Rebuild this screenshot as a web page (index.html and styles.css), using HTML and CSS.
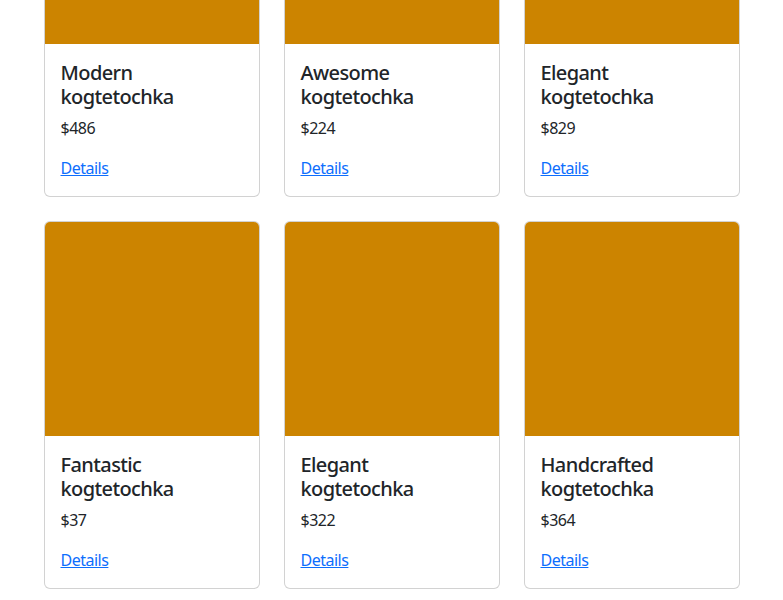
FILE: index.html
```html
<!DOCTYPE html>
<html lang="en">
<head>
<meta charset="utf-8">
<title>Kogtetochki</title>
<link rel="stylesheet" href="styles.css">
</head>
<body>
<main class="container">
  <div class="grid">
    <div class="card"><div class="card-img"></div><div class="card-body"><h5 class="card-title">Modern kogtetochka</h5><p class="card-text">$486</p><a href="#" class="card-link">Details</a></div></div>
    <div class="card"><div class="card-img"></div><div class="card-body"><h5 class="card-title">Awesome kogtetochka</h5><p class="card-text">$224</p><a href="#" class="card-link">Details</a></div></div>
    <div class="card"><div class="card-img"></div><div class="card-body"><h5 class="card-title">Elegant kogtetochka</h5><p class="card-text">$829</p><a href="#" class="card-link">Details</a></div></div>
    <div class="card"><div class="card-img"></div><div class="card-body"><h5 class="card-title">Fantastic kogtetochka</h5><p class="card-text">$37</p><a href="#" class="card-link">Details</a></div></div>
    <div class="card"><div class="card-img"></div><div class="card-body"><h5 class="card-title">Elegant kogtetochka</h5><p class="card-text">$322</p><a href="#" class="card-link">Details</a></div></div>
    <div class="card"><div class="card-img"></div><div class="card-body"><h5 class="card-title">Handcrafted kogtetochka</h5><p class="card-text">$364</p><a href="#" class="card-link">Details</a></div></div>
  </div>
</main>
</body>
</html>
```
FILE: styles.css
```css
* { box-sizing: border-box; }
html, body { margin: 0; padding: 0; overflow: hidden; }
body {
  font-family: "Noto Sans", "Open Sans", sans-serif;
  font-size: 16px;
  line-height: 1.5;
  color: #212529;
  background: #fff;
  letter-spacing: -0.5px;
}
.container {
  width: 720px;
  margin: -171px auto 0;
  padding: 0 12px;
}
.grid {
  display: grid;
  grid-template-columns: repeat(3, 216px);
  column-gap: 24px;
  row-gap: 24px;
  padding-bottom: 24px;
}
.card {
  display: flex;
  flex-direction: column;
  border: 1px solid rgba(0,0,0,0.175);
  border-radius: 6px;
  overflow: hidden;
  background: #fff;
}
.card-img {
  height: 214px;
  background: #cc8400;
}
.card-body { padding: 16px; }
.card-title {
  margin: 0 0 7px;
  padding-top: 1px;
  font-size: 20px;
  font-weight: 500;
  line-height: 1.2;
  letter-spacing: -0.6px;
}
.card-text { margin: 0 0 16px; }
.card-link {
  color: #0d6efd;
  text-decoration: underline;
}
```
